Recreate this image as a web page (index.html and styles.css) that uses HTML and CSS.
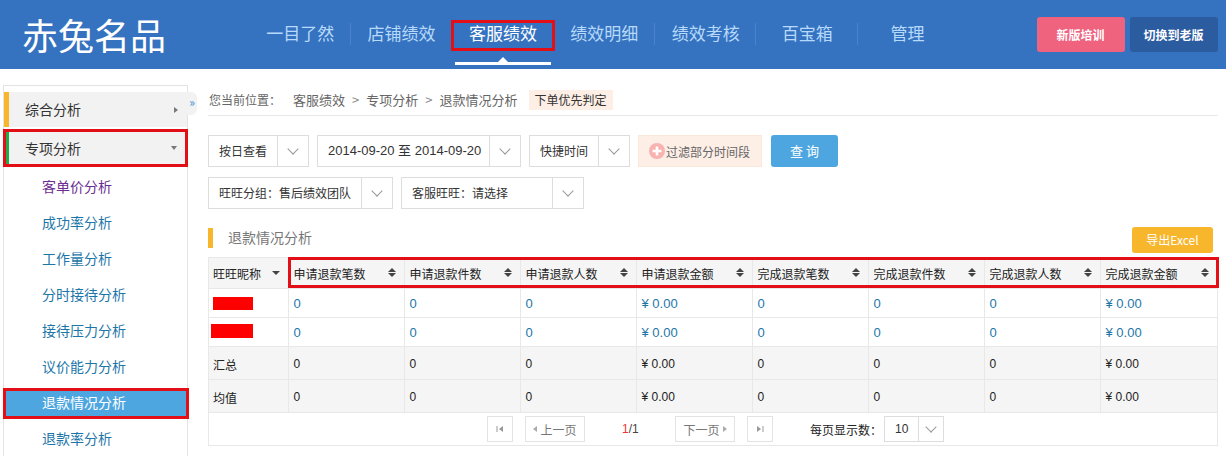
FILE: index.html
```html
<!DOCTYPE html>
<html lang="zh">
<head>
<meta charset="utf-8">
<title>退款情况分析</title>
<link rel="stylesheet" href="styles.css">
</head>
<body>
<header class="topbar">
  <div class="logo">赤兔名品</div>
  <nav class="nav">
    <a class="nav-item">一目了然</a>
    <a class="nav-item">店铺绩效</a>
    <a class="nav-item active">客服绩效</a>
    <a class="nav-item">绩效明细</a>
    <a class="nav-item">绩效考核</a>
    <a class="nav-item">百宝箱</a>
    <a class="nav-item last">管理</a>
  </nav>
  <div class="top-actions">
    <a class="top-btn pink">新版培训</a>
    <a class="top-btn navy">切换到老版</a>
  </div>
</header>
<div class="main">
  <aside class="sidebar">
    <span class="collapse">»</span>
    <div class="side-head yellow">综合分析<i class="tri-right"></i></div>
    <div class="side-head green">专项分析<i class="tri-down"></i></div>
    <a class="side-link visited">客单价分析</a>
    <a class="side-link">成功率分析</a>
    <a class="side-link">工作量分析</a>
    <a class="side-link">分时接待分析</a>
    <a class="side-link">接待压力分析</a>
    <a class="side-link">议价能力分析</a>
    <a class="side-link current">退款情况分析</a>
    <a class="side-link">退款率分析</a>
  </aside>
  <section class="content">
    <div class="crumbs">
      <span class="crumb-lead">您当前位置：</span><span class="crumb-first">客服绩效</span><span class="sep">&gt;</span><span>专项分析</span><span class="sep">&gt;</span><span>退款情况分析</span><span class="tag">下单优先判定</span>
    </div>
    <div class="filters">
      <div class="select w-day"><span class="select-text">按日查看</span><span class="select-arrow"><i class="chev"></i></span></div>
      <div class="select w-date"><span class="select-text">2014-09-20 至 2014-09-20</span><span class="select-arrow"><i class="chev"></i></span></div>
      <div class="select w-day"><span class="select-text">快捷时间</span><span class="select-arrow"><i class="chev"></i></span></div>
      <a class="filter-btn"><svg class="plus" width="16" height="16" viewBox="0 0 16 16"><circle cx="8" cy="8" r="8" fill="#f8b3b0"/><path d="M8 3.5v9M3.5 8h9" stroke="#fff" stroke-width="2.6"/></svg>过滤部分时间段</a>
      <a class="query-btn">查 询</a>
    </div>
    <div class="filters second">
      <div class="select w-group"><span class="select-text">旺旺分组<span class="colon">：</span>售后绩效团队</span><span class="select-arrow"><i class="chev"></i></span></div>
      <div class="select w-service"><span class="select-text">客服旺旺<span class="colon">：</span>请选择</span><span class="select-arrow"><i class="chev"></i></span></div>
    </div>
    <div class="section-head">
      <h2 class="section-title">退款情况分析</h2>
      <a class="export">导出Excel</a>
    </div>
    <div class="table-wrap">
      <div class="head-mark"></div>
      <table class="grid">
        <colgroup><col class="c-first"><col class="c-num"><col class="c-num"><col class="c-num"><col class="c-num"><col class="c-num"><col class="c-num"><col class="c-num"><col></colgroup>
        <thead>
          <tr>
            <th>旺旺昵称<i class="sort-down"></i></th>
            <th>申请退款笔数<i class="sort"></i></th>
            <th>申请退款件数<i class="sort"></i></th>
            <th>申请退款人数<i class="sort"></i></th>
            <th>申请退款金额<i class="sort"></i></th>
            <th>完成退款笔数<i class="sort"></i></th>
            <th>完成退款件数<i class="sort"></i></th>
            <th>完成退款人数<i class="sort"></i></th>
            <th>完成退款金额<i class="sort"></i></th>
          </tr>
        </thead>
        <tbody>
          <tr class="link-row r1">
            <td><span class="redact"></span></td><td>0</td><td>0</td><td>0</td><td>¥ 0.00</td><td>0</td><td>0</td><td>0</td><td>¥ 0.00</td>
          </tr>
          <tr class="link-row r2">
            <td><span class="redact wide"></span></td><td>0</td><td>0</td><td>0</td><td>¥ 0.00</td><td>0</td><td>0</td><td>0</td><td>¥ 0.00</td>
          </tr>
          <tr class="sum-row">
            <td class="label">汇总</td><td>0</td><td>0</td><td>0</td><td>¥ 0.00</td><td>0</td><td>0</td><td>0</td><td>¥ 0.00</td>
          </tr>
          <tr class="sum-row">
            <td class="label">均值</td><td>0</td><td>0</td><td>0</td><td>¥ 0.00</td><td>0</td><td>0</td><td>0</td><td>¥ 0.00</td>
          </tr>
        </tbody>
      </table>
      <div class="pager">
        <a class="page-btn edge"><svg width="8" height="8" viewBox="0 0 8 8"><path d="M1 1v6" stroke="#999"/><path d="M7 1v6L3 4z" fill="#999"/></svg></a>
        <a class="page-btn prev"><i class="p-left"></i>上一页</a>
        <span class="page-num"><b>1</b>/1</span>
        <a class="page-btn next">下一页<i class="p-right"></i></a>
        <a class="page-btn edge"><svg width="8" height="8" viewBox="0 0 8 8"><path d="M1 1v6l4-3z" fill="#999"/><path d="M7 1v6" stroke="#999"/></svg></a>
        <span class="per-page">每页显示数：</span>
        <div class="select per"><span class="select-text">10</span><span class="select-arrow"><i class="chev"></i></span></div>
      </div>
    </div>
  </section>
</div>
</body>
</html>
```
FILE: styles.css
```css
* { box-sizing: border-box; }
html, body { margin: 0; padding: 0; height: 456px; overflow: hidden; background: #fff; }
body { font-family: "Noto Sans CJK SC", "Liberation Sans", sans-serif; font-size: 12px; color: #333; }
a { text-decoration: none; }
i { display: block; font-style: normal; }

.topbar { height: 69px; background: #3572c0; display: flex; align-items: flex-start; }
.logo { margin-left: 22px; width: 228px; font-size: 36px; line-height: 69px; color: #fff; white-space: nowrap; }
.nav { display: flex; margin-top: 21px; width: 710px; margin-left: -0.5px; }
.nav-item { position: relative; width: 101.4px; height: 29px; line-height: 24px; text-align: center; font-size: 17px; color: #b7dafa; white-space: nowrap; }
.nav-item::after { content: ""; position: absolute; right: 0; top: 2px; height: 22px; border-right: 1px solid #4a82cb; }
.nav-item.last { padding-right: 2px; }
.nav-item.last::after { display: none; }
.nav-item.active { color: #fff; outline: 3px solid #e20f16; outline-offset: -2px; }
.nav-item.active::before { content: ""; position: absolute; left: 3px; right: 3px; top: 41px; height: 3px; background: #fff; }
.nav-item.active::after { right: auto; left: 50%; top: 36px; height: 0; margin-left: -5px; border-left: 5px solid transparent; border-right: 5px solid transparent; border-bottom: 5px solid #fff; }
.top-actions { display: flex; gap: 5px; margin-left: 77px; margin-top: 17px; }
.top-btn { width: 88px; height: 35px; line-height: 35px; border-radius: 3px; text-align: center; color: #fff; font-size: 12px; font-weight: 700; white-space: nowrap; }
.top-btn.pink { background: #f0637f; }
.top-btn.navy { background: #2c5ca0; }

.main { display: flex; align-items: flex-start; }
.sidebar { position: relative; width: 185px; height: 371px; margin: 16px 0 0 3px; padding-top: 6px; border: 1px solid #e3e3e3; border-bottom: 0; flex: none; }
.collapse { position: absolute; left: 183px; top: 6px; width: 10px; height: 23px; line-height: 20px; text-align: center; font-size: 12px; color: #3f8fd8; background: #f2f2f2; border-radius: 0 6px 6px 0; }
.side-head { position: relative; display: flex; align-items: center; padding-bottom: 1px; font-size: 14px; color: #333; background: #f2f2f2; }
.side-head.yellow { height: 35px; border-left: 5px solid #f8b62d; padding-left: 16px; }
.side-head.green { height: 32px; margin: 5px 2px 4px 2px; padding-left: 16px; border-left: 3px solid #22ab4a; outline: 3px solid #e20f16; }
.tri-right { position: absolute; right: 9px; top: 15px; border-left: 4px solid #777; border-top: 3px solid transparent; border-bottom: 3px solid transparent; }
.tri-down { position: absolute; right: 8px; top: 14px; border-top: 4px solid #777; border-left: 3px solid transparent; border-right: 3px solid transparent; }
.side-link { display: block; height: 36px; line-height: 36px; padding-left: 38px; font-size: 14px; color: #1d76a8; white-space: nowrap; }
.side-link.visited { color: #6c2d91; }
.side-link.current { height: 25px; line-height: 23px; margin: 7px 1px 4px 2px; padding-left: 36px; background: #4ea6e0; color: #fff; outline: 3px solid #e20f16; }

.content { width: 1010px; margin-left: 20px; flex: none; }
.crumbs { display: flex; align-items: center; height: 47px; padding-top: 15px; padding-left: 1px; border-bottom: 1px solid #e8e8e8; color: #666; font-size: 13px; white-space: nowrap; }
.crumb-lead { font-size: 12px; }
.crumb-first { margin-left: 12px; }
.sep { margin: 0 7px; color: #888; }
.tag { margin-left: 11px; padding: 0 6px; height: 20px; line-height: 20px; font-size: 12px; background: #fdeee6; color: #333; }

.filters { display: flex; align-items: stretch; gap: 8px; margin-top: 19px; height: 32px; }
.filters.second { margin-top: 10px; }
.select { display: flex; height: 32px; border: 1px solid #ddd; background: #fff; flex: none; }
.select-text { flex: 1; padding-left: 10px; line-height: 30px; color: #333; font-size: 12px; white-space: nowrap; }
.colon { font-family: "Noto Sans CJK TC", sans-serif; }
.select-arrow { width: 31px; border-left: 1px solid #ddd; display: flex; align-items: center; justify-content: center; flex: none; }
.chev { width: 8px; height: 8px; margin-top: -5px; border-right: 1px solid #999; border-bottom: 1px solid #999; transform: rotate(45deg); }
.w-day { width: 101px; }
.w-date { width: 204px; }
.w-date .select-text { font-family: "Liberation Sans", "Noto Sans CJK SC", sans-serif; font-size: 13px; }
.w-group { width: 185px; }
.w-service { width: 183px; }
.filter-btn { display: flex; align-items: center; width: 124px; padding-left: 10px; background: #fdeee6; border: 1px solid #fbe7dc; color: #666; font-size: 12px; white-space: nowrap; }
.plus { margin-right: 1px; flex: none; }
.query-btn { width: 67px; margin-left: 1px; line-height: 32px; text-align: center; background: #4ea6e0; color: #fff; border-radius: 3px; font-size: 13px; }

.section-head { display: flex; align-items: flex-start; justify-content: space-between; margin-top: 18px; height: 30px; }
.section-title { margin: 1px 0 0; height: 20px; line-height: 19px; padding-left: 15px; border-left: 5px solid #f8b62d; font-size: 14px; font-weight: 400; color: #777; }
.export { width: 81px; height: 26px; margin-right: 5px; line-height: 26px; text-align: center; background: #f8b62d; color: #fff; border-radius: 3px; font-size: 12px; }

.table-wrap { position: relative; width: 1010px; border: 1px solid #e8e8e8; border-top: 0; }
.head-mark { position: absolute; left: 79px; top: 0; width: 931px; height: 31px; border: 3px solid #e20f16; z-index: 2; pointer-events: none; }
.grid { width: 1008px; table-layout: fixed; border-collapse: collapse; }
.c-first { width: 79px; }
.c-num { width: 116px; }
.grid th, .grid td { border: 1px solid #e8e8e8; padding: 0 0 0 5px; text-align: left; font-weight: 400; font-size: 12px; white-space: nowrap; }
.grid tr > :first-child { border-left: 0; padding-left: 4px; }
.grid tr > :last-child { border-right: 0; }
.grid th { position: relative; height: 31px; background: #f5f5f5; color: #222; }
.sort, .sort-down { position: absolute; top: 50%; right: 8px; }
.sort::before, .sort::after { content: ""; display: block; border-left: 4px solid transparent; border-right: 4px solid transparent; }
.sort { margin-top: -5px; }
.sort::before { border-bottom: 4px solid #444; margin-bottom: 1px; }
.sort::after { border-top: 4px solid #444; }
.sort-down { margin-top: -2px; border-top: 4px solid #444; border-left: 4px solid transparent; border-right: 4px solid transparent; }
.link-row td { height: 29px; color: #1d76a8; font-family: "Liberation Sans", "Noto Sans CJK SC", sans-serif; font-size: 13px; }
.sum-row td { height: 33px; padding-top: 2px; background: #f5f5f5; color: #222; font-family: "Liberation Sans", "Noto Sans CJK SC", sans-serif; }
.sum-row td.label { font-family: "Noto Sans CJK SC", sans-serif; }
.redact { display: block; width: 40px; height: 13px; background: #f00; }
.redact.wide { width: 42px; height: 14px; margin-left: -2px; }
.r2 .redact { margin-bottom: 2px; }

.pager { display: flex; align-items: center; height: 32px; padding-left: 278px; font-size: 12px; color: #666; }
.page-btn { display: flex; align-items: center; justify-content: center; height: 26px; border: 1px solid #e3e3e3; color: #777; font-size: 12px; white-space: nowrap; flex: none; }
.edge { width: 26px; }
.prev { width: 60px; margin-left: 12px; gap: 3px; }
.next { width: 60px; gap: 3px; }
.p-left { border-right: 4px solid #aaa; border-top: 3px solid transparent; border-bottom: 3px solid transparent; }
.p-right { border-left: 4px solid #aaa; border-top: 3px solid transparent; border-bottom: 3px solid transparent; }
.page-num { width: 90px; padding-left: 37px; font-family: "Liberation Sans", sans-serif; color: #444; }
.page-num b { font-weight: 400; color: #e33; }
.next + .edge { margin-left: 12px; }
.per-page { margin-left: 37px; width: 74px; color: #222; white-space: nowrap; }
.per { width: 60px; height: 26px; }
.per .select-text { line-height: 24px; font-family: "Liberation Sans", sans-serif; }
.per .select-arrow { width: 25px; }
```
